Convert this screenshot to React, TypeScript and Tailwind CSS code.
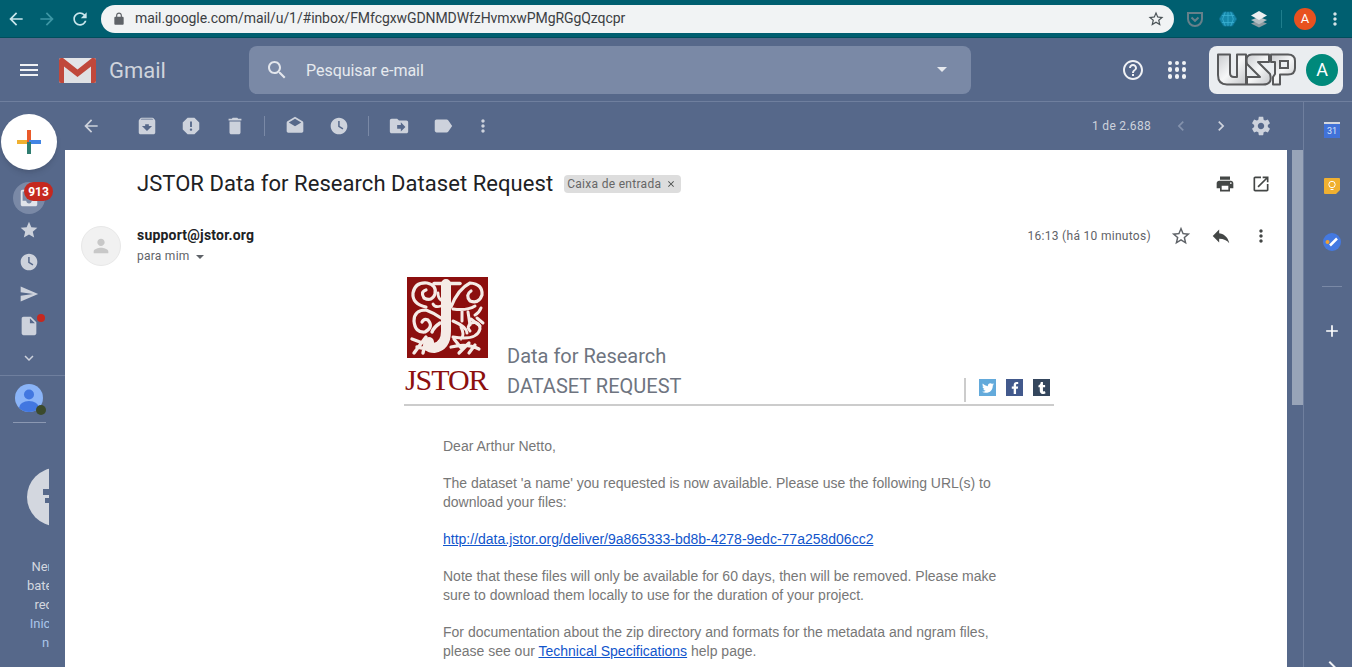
import React from "react";
import { FaTwitter, FaFacebookF, FaTumblr } from "react-icons/fa";

const P = {
  back: "M20 11H7.83l5.59-5.59L12 4l-8 8 8 8 1.41-1.41L7.83 13H20v-2z",
  forward: "M12 4l-1.41 1.41L16.17 11H4v2h12.17l-5.58 5.59L12 20l8-8z",
  reload: "M17.65 6.35C16.2 4.9 14.21 4 12 4c-4.42 0-7.99 3.58-7.99 8s3.57 8 7.99 8c3.73 0 6.84-2.55 7.73-6h-2.08c-.82 2.33-3.04 4-5.65 4-3.31 0-6-2.69-6-6s2.69-6 6-6c1.66 0 3.14.69 4.22 1.78L13 11h7V4l-2.35 2.35z",
  lock: "M18 8h-1V6c0-2.76-2.24-5-5-5S7 3.24 7 6v2H6c-1.1 0-2 .9-2 2v10c0 1.1.9 2 2 2h12c1.1 0 2-.9 2-2V10c0-1.1-.9-2-2-2zM9 6c0-1.66 1.34-3 3-3s3 1.34 3 3v2H9V6z",
  starO: "M22 9.24l-7.19-.62L12 2 9.19 8.63 2 9.24l5.46 4.73L5.82 21 12 17.27 18.18 21l-1.63-7.03L22 9.24zM12 15.4l-3.76 2.27 1-4.28-3.32-2.88 4.38-.38L12 6.1l1.71 4.04 4.38.38-3.32 2.88 1 4.28L12 15.4z",
  star: "M12 17.27L18.18 21l-1.64-7.03L22 9.24l-7.19-.61L12 2 9.19 8.63 2 9.24l5.46 4.73L5.82 21z",
  search: "M15.5 14h-.79l-.28-.27C15.41 12.59 16 11.11 16 9.5 16 5.91 13.09 3 9.5 3S3 5.91 3 9.5 5.91 16 9.5 16c1.61 0 3.09-.59 4.23-1.57l.27.28v.79l5 4.99L20.49 19l-4.99-5zm-6 0C7.01 14 5 11.99 5 9.5S7.01 5 9.5 5 14 7.01 14 9.5 11.99 14 9.5 14z",
  help: "M11 18h2v-2h-2v2zm1-16C6.48 2 2 6.48 2 12s4.48 10 10 10 10-4.48 10-10S17.52 2 12 2zm0 18c-4.41 0-8-3.59-8-8s3.59-8 8-8 8 3.59 8 8-3.59 8-8 8zm0-14c-2.21 0-4 1.79-4 4h2c0-1.1.9-2 2-2s2 .9 2 2c0 2-3 1.75-3 5h2c0-2.25 3-2.5 3-5 0-2.21-1.79-4-4-4z",
  archive: "M20.54 5.23l-1.39-1.68C18.88 3.21 18.47 3 18 3H6c-.47 0-.88.21-1.16.55L3.46 5.23C3.17 5.57 3 6.02 3 6.5V19c0 1.1.9 2 2 2h14c1.1 0 2-.9 2-2V6.5c0-.48-.17-.93-.46-1.27zM12 17.5L6.5 12H10v-2h4v2h3.5L12 17.5zM5.12 5l.81-1h12l.94 1H5.12z",
  report: "M15.73 3H8.27L3 8.27v7.46L8.27 21h7.46L21 15.73V8.27L15.73 3zM12 17.3c-.72 0-1.3-.58-1.3-1.3 0-.72.58-1.3 1.3-1.3.72 0 1.3.58 1.3 1.3 0 .72-.58 1.3-1.3 1.3zm1-4.3h-2V7h2v6z",
  trash: "M6 19c0 1.1.9 2 2 2h8c1.1 0 2-.9 2-2V7H6v12zM19 4h-3.5l-1-1h-5l-1 1H5v2h14V4z",
  mailOpen: "M21.99 8c0-.72-.37-1.35-.94-1.7L12 1 2.95 6.3C2.38 6.65 2 7.28 2 8v10c0 1.1.9 2 2 2h16c1.1 0 2-.9 2-2l-.01-10zM12 3.300L19.500 7.700 12 12.300 4.500 7.700 12 3.300z",
  clock: "M11.99 2C6.47 2 2 6.48 2 12s4.47 10 9.99 10C17.52 22 22 17.52 22 12S17.52 2 11.99 2zm4.24 14.24L11 13V6h1.8v6.1l4.4 2.6-.97 1.54z",
  move: "M20 6h-8l-2-2H4c-1.1 0-2 .9-2 2v12c0 1.1.9 2 2 2h16c1.1 0 2-.9 2-2V8c0-1.1-.9-2-2-2zm-6 12v-3h-4v-4h4V8l5 5-5 5z",
  label: "M17.63 5.84C17.27 5.33 16.67 5 16 5L5 5.01C3.9 5.01 3 5.9 3 7v10c0 1.1.9 1.99 2 1.99L16 19c.67 0 1.27-.33 1.63-.84L22 12l-4.37-6.16z",
  dots: "M12 8c1.1 0 2-.9 2-2s-.9-2-2-2-2 .9-2 2 .9 2 2 2zm0 2c-1.1 0-2 .9-2 2s.9 2 2 2 2-.9 2-2-.9-2-2-2zm0 6c-1.1 0-2 .9-2 2s.9 2 2 2 2-.9 2-2-.9-2-2-2z",
  left: "M15.41 7.41L14 6l-6 6 6 6 1.41-1.41L10.83 12z",
  right: "M10 6L8.59 7.41 13.17 12l-4.58 4.59L10 18l6-6z",
  down: "M7.41 8.59L12 13.17l4.59-4.58L18 10l-6 6-6-6z",
  gear: "M19.43 12.98c.04-.32.07-.64.07-.98s-.03-.66-.07-.98l2.11-1.65c.19-.15.24-.42.12-.64l-2-3.46c-.12-.22-.39-.3-.61-.22l-2.49 1c-.52-.4-1.08-.73-1.69-.98l-.38-2.65C14.46 2.18 14.25 2 14 2h-4c-.25 0-.46.18-.49.42l-.38 2.65c-.61.25-1.17.59-1.69.98l-2.49-1c-.23-.09-.49 0-.61.22l-2 3.46c-.13.22-.07.49.12.64l2.11 1.65c-.04.32-.07.65-.07.98s.03.66.07.98l-2.11 1.65c-.19.15-.24.42-.12.64l2 3.46c.12.22.39.3.61.22l2.49-1c.52.4 1.08.73 1.69.98l.38 2.65c.03.24.24.42.49.42h4c.25 0 .46-.18.49-.42l.38-2.65c.61-.25 1.17-.59 1.69-.98l2.49 1c.23.09.49 0 .61-.22l2-3.46c.12-.22.07-.49-.12-.64l-2.11-1.65zM12 15.5c-1.93 0-3.5-1.57-3.5-3.5s1.57-3.5 3.5-3.5 3.5 1.57 3.5 3.5-1.57 3.5-3.5 3.5z",
  print: "M19 8H5c-1.66 0-3 1.34-3 3v6h4v4h12v-4h4v-6c0-1.66-1.34-3-3-3zm-3 11H8v-5h8v5zm3-7c-.55 0-1-.45-1-1s.45-1 1-1 1 .45 1 1-.45 1-1 1zm-1-9H6v4h12V3z",
  open: "M19 19H5V5h7V3H5c-1.11 0-2 .9-2 2v14c0 1.1.89 2 2 2h14c1.1 0 2-.9 2-2v-7h-2v7zM14 3v2h3.59l-9.83 9.83 1.41 1.41L19 6.41V10h2V3h-7z",
  reply: "M10 9V5l-7 7 7 7v-4.1c5 0 8.5 1.6 11 5.1-1-5-4-10-11-11z",
  send: "M2.01 21L23 12 2.01 3 2 10l15 2-15 2z",
  inbox: "M19 3H5c-1.1 0-2 .9-2 2v14c0 1.1.9 2 2 2h14c1.1 0 2-.9 2-2V5c0-1.1-.9-2-2-2zm0 12h-4c0 1.66-1.34 3-3 3s-3-1.34-3-3H5V5h14v10z",
  draft: "M6 2c-1.1 0-2 .9-2 2v16c0 1.1.9 2 2 2h12c1.1 0 2-.9 2-2V8l-6-6H6zm7 7V3.5L18.5 9H13z",
  plus: "M19 13h-6v6h-2v-6H5v-2h6V5h2v6h6v2z",
  person: "M12 12c2.21 0 4-1.79 4-4s-1.79-4-4-4-4 1.79-4 4 1.79 4 4 4zm0 2c-2.67 0-8 1.34-8 4v2h16v-2c0-2.66-5.33-4-8-4z",
  close: "M19 6.41L17.59 5 12 10.59 6.41 5 5 6.41 10.59 12 5 17.59 6.41 19 12 13.41 17.59 19 19 17.59 13.41 12z",
};

function Ic({ d, size = 24, className = "" }: { d: string; size?: number; className?: string }) {
  return (
    <svg viewBox="0 0 24 24" width={size} height={size} fill="currentColor" fillRule="evenodd" className={className}>
      <path d={d} />
    </svg>
  );
}

function Cell({ d, w = "w-[44px]", size = 22, className = "text-[#cdd2dc]" }: { d: string; w?: string; size?: number; className?: string }) {
  return (
    <div className={`${w} h-full flex items-center justify-center shrink-0 ${className}`}>
      <Ic d={d} size={size} />
    </div>
  );
}

function Chrome() {
  return (
    <div className="h-[38px] bg-[#005f70] border-b border-[#004e5c] flex items-center shrink-0">
      <div className="w-[31px] ml-0 flex justify-center text-[#c9e6ec]"><Ic d={P.back} size={20} /></div>
      <div className="w-[32px] flex justify-center text-[#3d97a5]"><Ic d={P.forward} size={20} /></div>
      <div className="w-[34px] flex justify-center text-[#c9e6ec]"><Ic d={P.reload} size={20} /></div>
      <div className="ml-[4px] w-[1073px] h-[28px] bg-[#f1f3f4] rounded-full flex items-center">
        <div className="ml-[11px] w-[14px] text-[#5f6368]"><Ic d={P.lock} size={14} /></div>
        <span className="ml-[9px] text-[14px] text-[#3c4043] tracking-[-0.08px]">mail.google.com/mail/u/1/#inbox/FMfcgxwGDNMDWfzHvmxwPMgRGgQzqcpr</span>
        <div className="ml-auto mr-[9px] text-[#4a5256]"><Ic d={P.starO} size={18} /></div>
      </div>
      <div className="ml-[12px] w-[18px] flex justify-center">
        <svg viewBox="0 0 18 16" width="18" height="16" fill="none" stroke="#66808a" strokeWidth="2">
          <path d="M2 2h14v6a7 7 0 0 1-14 0z" />
          <path d="M5.5 6.5L9 9.8l3.5-3.3" />
        </svg>
      </div>
      <div className="ml-[14px] w-[20px] flex justify-center">
        <svg viewBox="0 0 20 18" width="18" height="16" fill="#1689ab" stroke="#0d6f8d">
          <path d="M5 1h10l5 8-5 8H5L0 9z" />
          <path d="M3 5h14M3 13h14M7 1L4 9l3 8M13 1l3 8-3 8M10 1v16" fill="none" stroke="#3fb4d6" strokeWidth=".8" />
        </svg>
      </div>
      <div className="ml-[12px] w-[18px] flex justify-center">
        <svg viewBox="0 0 18 18" width="18" height="18">
          <path d="M9 10.5L1 13.5 9 17.5l8-4z" fill="#8b9aa0" />
          <path d="M9 7L1 10l8 4.2 8-4.2z" fill="#b5bfc3" />
          <path d="M9 1L1 5.5 9 10l8-4.5z" fill="#eceff0" />
        </svg>
      </div>
      <div className="ml-[13px] w-px h-[18px] bg-[#1f7e8d]" />
      <div className="ml-[12px] w-[22px] h-[22px] rounded-full bg-[#e8511f] text-white text-[13px] flex items-center justify-center">A</div>
      <div className="ml-[9px] w-[20px] flex justify-center text-[#d5e3e6]"><Ic d={P.dots} size={20} /></div>
    </div>
  );
}

function UspLogo() {
  return (
    <svg viewBox="0 0 79 33" width="79" height="33" className="shrink-0">
      <defs>
        <linearGradient id="uspg" x1="0" y1="0" x2="1" y2="1">
          <stop offset="0" stopColor="#c9cbce" />
          <stop offset=".5" stopColor="#f6f7f8" />
          <stop offset="1" stopColor="#c4c6c9" />
        </linearGradient>
      </defs>
      <g fill="url(#uspg)" stroke="#58595b" strokeWidth="2" strokeLinejoin="round">
        <path d="M1 1.5H13V20Q13 24 17 24H20V1.5H29V31.5H10Q1 31.5 1 22Z" />
        <path d="M35 1.5H52V9H41L53 21Q56 31.5 46 31.5H30V24H43L30 11Q28 1.5 35 1.5Z" />
        <path d="M54 1.5H71Q78 1.5 78 8V15Q78 21.5 71 21.5H63V31.5H56V24L58 21V9H54Z" />
      </g>
      <path d="M63 8H71V15H63Z" fill="#eaedf0" stroke="#58595b" strokeWidth="2" />
    </svg>
  );
}

function GmailHeader() {
  return (
    <div className="h-[64px] border-b border-[#6f7f9e] flex items-center shrink-0">
      <div className="w-[58px] flex justify-center text-[#f0f2f5]">
        <svg viewBox="0 0 24 24" width="24" height="24" fill="currentColor"><path d="M3 18h18v-2H3v2zm0-5h18v-2H3v2zm0-7v2h18V6H3z" /></svg>
      </div>
      <svg viewBox="0 0 37 26" width="37" height="26" className="ml-px shrink-0">
        <path d="M2 1h33a2 2 0 0 1 2 2v21a2 2 0 0 1-2 2H2a2 2 0 0 1-2-2V3a2 2 0 0 1 2-2z" fill="#e3e5e8" />
        <path d="M3 26V8l15.500 12L34 8v18" fill="#dfe1e4" />
        <path d="M0 3v21a2 2 0 0 0 2 2h3V9.500l13.500 10.500L32 9.500V26h3a2 2 0 0 0 2-2V3a2 2 0 0 0-2-2h-2L18.500 12.500 4 1H2a2 2 0 0 0-2 2z" fill="#c0483b" />
      </svg>
      <span className="ml-[13px] mt-[3px] w-[57px] text-[22px] text-[#cfd4dc] leading-none">Gmail</span>
      <div className="ml-[83px] w-[722px] h-[48px] bg-[#7a89a6] rounded-[8px] flex items-center shrink-0">
        <div className="ml-[16px] text-[#e3e6ec]"><Ic d={P.search} size={24} /></div>
        <span className="ml-[17px] mt-[3px] text-[16px] text-[#e6e9ee] tracking-[-0.03px]">Pesquisar e-mail</span>
        <div className="ml-auto mr-[24px] w-0 h-0 border-x-[5px] border-x-transparent border-t-[5px] border-t-[#e6e9ee]" />
      </div>
      <div className="ml-[150px] w-[24px] text-[#f0f2f5]"><Ic d={P.help} size={24} /></div>
      <div className="ml-[20px] w-[24px] h-[24px] grid grid-cols-3 gap-[2.500px] p-[3px]">
        {Array.from({ length: 9 }).map((_, i) => (
          <span key={i} className="bg-[#f0f2f5] rounded-full" />
        ))}
      </div>
      <div className="ml-[20px] w-[134px] h-[48px] bg-[#eaedf0] rounded-[8px] flex items-center pl-[8px]">
        <UspLogo />
        <div className="ml-[10px] w-[32px] h-[32px] rounded-full bg-[#00897b] text-white text-[18px] flex items-center justify-center">A</div>
      </div>
    </div>
  );
}

function Compose() {
  return (
    <div className="mt-[12px] w-[56px] h-[56px] rounded-full bg-white shadow-md flex items-center justify-center shrink-0">
      <svg viewBox="0 0 24 24" width="24" height="24">
        <rect x="10" y="0" width="4" height="12" fill="#ea5a2a" />
        <rect x="12" y="10" width="12" height="4" fill="#4285e4" />
        <rect x="10" y="12" width="4" height="12" fill="#2f7d70" />
        <rect x="0" y="10" width="10" height="4" fill="#f0b030" />
      </svg>
    </div>
  );
}

function RailCell({ children }: { children: React.ReactNode }) {
  return <div className="relative w-full h-[32px] flex items-center justify-center text-[#cdd2dc] shrink-0">{children}</div>;
}

function LeftRail() {
  return (
    <div className="w-[65px] h-full flex flex-col shrink-0 overflow-hidden">
      <div className="w-[58px] flex flex-col items-center">
        <Compose />
        <div className="h-[12px]" />
        <RailCell>
          <div className="w-[32px] h-[32px] rounded-full bg-[#7a89a6] flex items-center justify-center">
            <Ic d={P.inbox} size={22} className="text-[#e1e4ea]" />
          </div>
          <span className="absolute left-[24px] top-0 w-[29px] h-[19px] rounded-full bg-[#c5281f] text-white text-[12px] font-bold flex items-center justify-center">913</span>
        </RailCell>
        <RailCell><Ic d={P.star} size={20} /></RailCell>
        <RailCell><Ic d={P.clock} size={20} /></RailCell>
        <RailCell><Ic d={P.send} size={20} /></RailCell>
        <RailCell>
          <Ic d={P.draft} size={22} />
          <span className="absolute left-[37px] top-[4px] w-[8px] h-[8px] rounded-full bg-[#c5281f]" />
        </RailCell>
        <RailCell><Ic d={P.down} size={18} /></RailCell>
      </div>
      <div className="mt-px h-px bg-[#6f7f9e]" />
      <div className="w-[58px] flex flex-col items-center">
        <div className="relative mt-[8px] w-[28px] h-[28px] rounded-full bg-[#8ab4f8] overflow-visible">
          <svg viewBox="0 0 28 28" width="28" height="28">
            <clipPath id="av"><circle cx="14" cy="14" r="14" /></clipPath>
            <g clipPath="url(#av)" fill="#4277e0">
              <circle cx="14" cy="10.500" r="5" />
              <ellipse cx="14" cy="24" rx="10" ry="7" />
            </g>
          </svg>
          <span className="absolute left-[21px] top-[21px] w-[10px] h-[10px] rounded-full bg-[#3b4a2c]" />
        </div>
        <div className="mt-[10px] w-[33px] h-px bg-[#8b98b2]" />
      </div>
      <div className="w-[49px] overflow-hidden mt-[45px]">
        <div className="w-[112px] flex flex-col items-center">
          <div className="relative w-[58px] h-[58px] rounded-full bg-[#d3d7df]">
            <span className="absolute left-[16px] top-[21px] w-[8px] h-[6px] bg-[#56688a]" />
            <span className="absolute left-[18px] top-[30px] w-[6px] h-[5px] bg-[#56688a]" />
          </div>
          <div className="mt-[31px] text-[13px] leading-[19px] text-center text-[#d3d7df] whitespace-nowrap">
            <div>Nenhum</div>
            <div>bate-papo</div>
            <div>recente</div>
            <div className="text-[#a9c4e8]">Inicie um</div>
            <div className="text-[#a9c4e8]">novo</div>
          </div>
        </div>
      </div>
    </div>
  );
}

function Toolbar() {
  const Sep = ({ ml }: { ml: string }) => <div className={`${ml} w-px h-[20px] bg-[#7a89a6] shrink-0`} />;
  return (
    <div className="h-[48px] flex items-center shrink-0">
      <div className="ml-[4px] h-full flex items-center">
        <Cell d={P.back} size={20} />
      </div>
      <div className="ml-[12px] h-full flex items-center">
        <Cell d={P.archive} />
        <Cell d={P.report} />
        <Cell d={P.trash} />
      </div>
      <Sep ml="ml-[7px]" />
      <div className="ml-[8px] h-full flex items-center">
        <Cell d={P.mailOpen} size={20} />
        <Cell d={P.clock} size={20} />
      </div>
      <Sep ml="ml-[7px]" />
      <div className="ml-[8px] h-full flex items-center">
        <Cell d={P.move} />
        <Cell d={P.label} />
        <Cell d={P.dots} w="w-[36px]" size={20} />
      </div>
      <span className="ml-auto mr-[10px] text-[12px] text-[#cdd2dc] tracking-[0.3px]">1 de 2.688</span>
      <Cell d={P.left} w="w-[40px]" size={20} className="text-[#8492ac]" />
      <Cell d={P.right} w="w-[40px]" size={20} />
      <Cell d={P.gear} w="w-[40px]" size={22} />
      <div className="w-[6px]" />
    </div>
  );
}

function JstorEmblem() {
  return (
    <svg viewBox="0 0 81 81" width="81" height="81" className="shrink-0">
      <rect width="81" height="81" fill="#8c0f0e" />
      <g fill="none" stroke="#f5ebe6" strokeLinecap="round" strokeLinejoin="round">
        <path d="M27 6.500H53" strokeWidth="3.500" />
        <path d="M39 7V54Q39 69 27 71Q20 71 22 65" strokeWidth="10" />
        <path d="M19 30Q5 27 6 16Q8 5 20 6Q30 8 28 17Q25 25 17 21Q13 15 19 13" strokeWidth="3.200" />
        <path d="M34 29Q28 31 26 27M34 23Q31 21 31 16" strokeWidth="2.800" />
        <path d="M34 41Q27 36 19 33Q7 33 7 44Q8 56 18 55Q27 50 21 43Q17 41 15 45" strokeWidth="3.200" />
        <path d="M33 46Q27 50 25 55M19 60L7 76M19 62L16 76M22 64L28 72M13 65L5 62M10 70L20 72" strokeWidth="3.400" />
        <path d="M44 30Q51 12 63 6Q76 7 75 18Q72 27 63 24Q58 18 64 14" strokeWidth="3.200" />
        <path d="M46 32Q60 34 68 29M55 33L55 44M61 35L63 48M68 38Q72 36 74 31M70 41L76 46M64 42L73 49M46 44Q60 50 60 56" strokeWidth="3" />
        <path d="M46 60Q70 64 73 52Q73 44 64 46Q59 50 63 54M54 50Q58 58 54 62" strokeWidth="3" />
        <path d="M44 70Q60 66 72 72M52 76L62 66M62 76L68 68M47 62L55 72" strokeWidth="3.200" />
      </g>
    </svg>
  );
}

function Social({ bg, children }: { bg: string; children: React.ReactNode }) {
  return <div className={`${bg} w-[17px] h-[17px] flex items-center justify-center text-white text-[12px] shrink-0`}>{children}</div>;
}

function EmailBody() {
  return (
    <div className="ml-[339px] w-[650px]">
      <div className="h-[140px] flex items-end border-b-2 border-[#cccccc]">
        <div className="w-[103px] shrink-0 pb-[9px]">
          <div className="pl-[3px]"><JstorEmblem /></div>
          <div className="mt-[7px] text-[30px] leading-[30px] text-[#8c0f0e] tracking-[-1.050px] whitespace-nowrap pl-px [font-family:'Liberation_Serif',serif]">JSTOR</div>
        </div>
        <div className="flex-1 pb-[3px] text-[20px] leading-[30px] text-[#6e7480]">
          <div>Data for Research</div>
          <div>DATASET REQUEST</div>
        </div>
        <div className="w-[90px] h-[24px] flex items-start pr-[4px] border-l-2 border-[#cccccc] mb-[2px]">
          <div className="ml-[13px] mt-px flex gap-[10px]">
            <Social bg="bg-[#63aadb]"><FaTwitter /></Social>
            <Social bg="bg-[#42598c]"><FaFacebookF /></Social>
            <Social bg="bg-[#34465d]"><FaTumblr /></Social>
          </div>
        </div>
      </div>
      <div className="pt-[31px] pl-[39px] w-[600px] text-[14px] leading-[19px] text-[#777777] [font-family:'Liberation_Sans',Arial,sans-serif] flex flex-col gap-[18px]">
        <p>Dear Arthur Netto,</p>
        <p>The dataset 'a name' you requested is now available. Please use the following URL(s) to<br />download your files:</p>
        <p><a className="text-[#1155cc] underline">http://data.jstor.org/deliver/9a865333-bd8b-4278-9edc-77a258d06cc2</a></p>
        <p>Note that these files will only be available for 60 days, then will be removed. Please make<br />sure to download them locally to use for the duration of your project.</p>
        <p>For documentation about the zip directory and formats for the metadata and ngram files,<br />please see our <a className="text-[#1155cc] underline">Technical Specifications</a> help page.</p>
      </div>
    </div>
  );
}

function Message() {
  return (
    <div className="flex-1 bg-white overflow-hidden">
      <div className="h-[68px] flex items-center pl-[72px]">
        <h1 className="-mt-[2px] text-[22px] font-normal text-[#202124] whitespace-nowrap tracking-[0.05px]">JSTOR Data for Research Dataset Request</h1>
        <span className="ml-[11px] h-[18px] pl-[3px] pr-[5px] bg-[#dddddd] rounded-[4px] text-[12px] text-[#666666] flex items-center gap-[5px] tracking-[0.3px]">
          Caixa de entrada
          <Ic d={P.close} size={10} className="text-[#444746]" />
        </span>
        <div className="ml-auto flex h-[36px] pr-[8px]">
          <Cell d={P.print} w="w-[36px]" size={20} className="text-[#444746]" />
          <Cell d={P.open} w="w-[36px]" size={20} className="text-[#444746]" />
        </div>
      </div>
      <div className="h-[48px] flex items-start pl-[16px]">
        <div className="mt-[8px] w-[40px] h-[40px] rounded-full bg-[#f1f1f1] border border-[#e8e8e8] flex items-center justify-center text-[#c8c8c8]">
          <Ic d={P.person} size={22} />
        </div>
        <div className="ml-[16px] pt-[7px]">
          <div className="text-[14px] leading-[20px] font-bold text-[#202124] tracking-[0.2px]">support@jstor.org</div>
          <div className="mt-[3px] text-[12px] leading-[16px] text-[#5f6368] flex items-center tracking-[0.25px]">
            para mim
            <span className="ml-[6px] mt-[1px] w-0 h-0 border-x-[4px] border-x-transparent border-t-[4px] border-t-[#5f6368]" />
          </div>
        </div>
        <div className="ml-auto flex items-start pr-[6px]">
          <span className="mt-[8px] mr-[10px] text-[12px] leading-[20px] text-[#5f6368] tracking-[0.3px]">16:13 (há 10 minutos)</span>
          <div className="flex h-[36px]">
            <Cell d={P.starO} w="w-[40px]" size={22} className="text-[#5f6368]" />
            <Cell d={P.reply} w="w-[40px]" size={22} className="text-[#444746]" />
            <Cell d={P.dots} w="w-[40px]" size={20} className="text-[#444746]" />
          </div>
        </div>
      </div>
      <EmailBody />
    </div>
  );
}

function RightRail() {
  return (
    <div className="w-[49px] h-full border-l border-[#6f7f9e] pl-[8px] flex flex-col items-center shrink-0 overflow-hidden">
      <div className="mt-[16px] h-[24px] flex items-center">
        <div className="w-[16px] h-[16px] flex flex-col">
          <div className="h-[2px] bg-[#d5d8de]" />
          <div className="flex-1 bg-[#4172d8] text-[#dbe5fb] text-[9px] leading-none flex items-center justify-center">31</div>
        </div>
      </div>
      <div className="mt-[32px] h-[24px] flex items-center">
        <svg viewBox="0 0 16 16" width="16" height="16">
          <path d="M1 0h14a1 1 0 0 1 1 1v11l-4 4H1a1 1 0 0 1-1-1V1a1 1 0 0 1 1-1z" fill="#f0b030" />
          <circle cx="8" cy="6.500" r="3.200" fill="none" stroke="#fff" strokeWidth="1" />
          <path d="M6.500 11.500h3" stroke="#fff" strokeWidth="1" />
        </svg>
      </div>
      <div className="mt-[32px] h-[24px] flex items-center">
        <svg viewBox="0 0 18 18" width="18" height="18">
          <circle cx="9" cy="9" r="9" fill="#4479e1" />
          <circle cx="4.500" cy="9" r="2" fill="#f0a030" />
          <path d="M7 12.500L14 5.500" stroke="#fff" strokeWidth="2.500" />
        </svg>
      </div>
      <div className="mt-[32px] w-[20px] h-px bg-[#7a89a6]" />
      <div className="mt-[32px] h-[24px] flex items-center text-white"><Ic d={P.plus} size={20} /></div>
      <div className="mt-auto -mb-[12px] text-[#f0f2f5]"><Ic d={P.right} size={24} /></div>
    </div>
  );
}

export default function App() {
  return (
    <div className="w-[1352px] h-[667px] overflow-hidden bg-[#56688a] flex flex-col [font-family:Roboto,'Noto_Sans',sans-serif]">
      <Chrome />
      <GmailHeader />
      <div className="flex-1 min-h-0 flex">
        <LeftRail />
        <div className="w-[1222px] h-full flex flex-col shrink-0">
          <Toolbar />
          <Message />
        </div>
        <div className="w-[16px] pl-[5px] pt-[48px] shrink-0">
          <div className="w-[11px] h-[255px] bg-[#98a4b8]" />
        </div>
        <RightRail />
      </div>
    </div>
  );
}
